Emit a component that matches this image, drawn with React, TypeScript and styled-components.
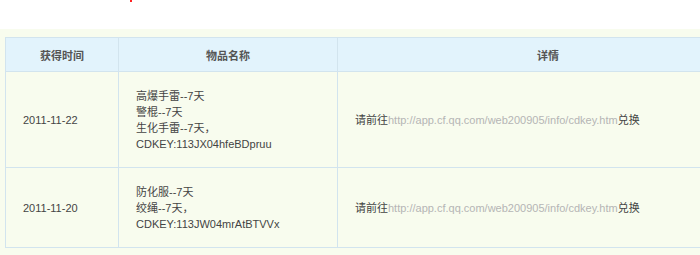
import React from "react";
import styled, { createGlobalStyle } from "styled-components";

const GlobalStyle = createGlobalStyle`
  body {
    margin: 0;
    overflow: hidden;
    background: #ffffff;
    font-family: "Liberation Sans", "Noto Sans CJK SC", sans-serif;
    font-size: 11px;
    color: #444;
  }
`;

const Page = styled.div`
  width: 700px;
  height: 255px;
  overflow: hidden;
`;

const TopBar = styled.div`
  height: 29px;
  background: #ffffff;
`;

const Dot = styled.div`
  width: 2px;
  height: 2px;
  margin-left: 130px;
  background: #f22;
`;

const Content = styled.div`
  background: #f8fcee;
  padding: 8px 0 0 5px;
  height: 226px;
  box-sizing: border-box;
`;

const Table = styled.table`
  border-collapse: collapse;
  width: 754px;
  table-layout: fixed;
`;

const Th = styled.th<{ w?: number }>`
  width: ${(p) => (p.w ? `${p.w}px` : "auto")};
  height: 33px;
  padding: 0;
  background: #e2f3fc;
  border: 1px solid #d2e4ee;
  color: #555;
  font-size: 11px;
  font-weight: bold;
  text-align: center;
`;

const Td = styled.td`
  border: 1px solid #d2e4ee;
  padding: 16px 0 15px 17px;
  vertical-align: middle;
  line-height: 16px;
  color: #444;
`;

const Link = styled.span`
  color: #b5b5b5;
`;

type Row = { date: string; items: string[]; key: string };

const rows: Row[] = [
  {
    date: "2011-11-22",
    items: ["高爆手雷--7天", "警棍--7天", "生化手雷--7天，"],
    key: "CDKEY:113JX04hfeBDpruu",
  },
  {
    date: "2011-11-20",
    items: ["防化服--7天", "绞绳--7天，"],
    key: "CDKEY:113JW04mrAtBTVVx",
  },
];

export default function App(): JSX.Element {
  return (
    <Page>
      <GlobalStyle />
      <TopBar>
        <Dot />
      </TopBar>
      <Content>
        <Table>
          <thead>
            <tr>
              <Th w={112}>获得时间</Th>
              <Th w={218}>物品名称</Th>
              <Th>详情</Th>
            </tr>
          </thead>
          <tbody>
            {rows.map((r) => (
              <tr key={r.date}>
                <Td>{r.date}</Td>
                <Td>
                  {r.items.map((it) => (
                    <div key={it}>{it}</div>
                  ))}
                  <div>{r.key}</div>
                </Td>
                <Td>
                  请前往<Link>http://app.cf.qq.com/web200905/info/cdkey.htm</Link>兑换
                </Td>
              </tr>
            ))}
          </tbody>
        </Table>
      </Content>
    </Page>
  );
}
